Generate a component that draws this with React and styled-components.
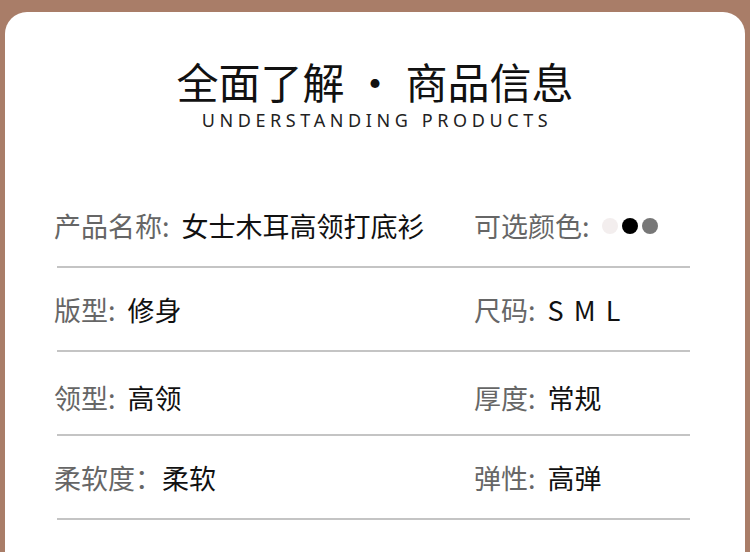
import React from "react";
import styled, { createGlobalStyle } from "styled-components";

const GlobalStyle = createGlobalStyle`
  html, body {
    margin: 0;
    padding: 0;
    background: #a97d68;
  }
  body {
    font-family: "Noto Sans CJK SC", "Noto Sans", sans-serif;
  }
`;

const Page = styled.div`
  width: 750px;
  height: 552px;
  overflow: hidden;
  padding-top: 12px;
  box-sizing: border-box;
`;

const Card = styled.div`
  margin: 0 5px;
  height: 560px;
  background: #ffffff;
  border-radius: 22px 22px 0 0;
  padding-top: 46px;
  box-sizing: border-box;
`;

const Heading = styled.header`
  text-align: center;
`;

const Title = styled.h1`
  margin: 0;
  font-size: 42px;
  line-height: 46px;
  font-weight: 400;
  color: #111;
`;

const Subtitle = styled.div`
  margin-top: 5px;
  padding-left: 4px;
  font-family: "Noto Sans", sans-serif;
  font-size: 18px;
  line-height: 22px;
  letter-spacing: 4.6px;
  color: #222;
`;

const List = styled.div`
  margin-top: 53px;
  padding: 0 55px 0 52px;
`;

const Row = styled.div`
  display: grid;
  grid-template-columns: 420px 1fr;
  height: 84px;
  box-sizing: border-box;
  padding-top: ${(p) => p.$top || 28}px;
  border-bottom: 2px solid #c4c4c4;
`;

const Field = styled.div`
  display: flex;
  align-items: center;
  height: 30px;
  margin-left: -3px;
  font-size: 27px;
  line-height: 30px;
  white-space: nowrap;
`;

const Label = styled.span`
  color: #666;
  margin-right: ${(p) => (p.$wide ? 0 : 12)}px;
`;

const Value = styled.span`
  color: #111;
  letter-spacing: ${(p) => p.$spaced || 0}px;
`;

const Dots = styled.span`
  display: inline-flex;
  align-items: center;
  gap: 4px;
`;

const Dot = styled.span`
  width: 16px;
  height: 16px;
  border-radius: 50%;
  background: ${(p) => p.$color};
`;

const rows = [
  {
    top: 27,
    left: ["产品名称:", "女士木耳高领打底衫"],
    right: ["可选颜色:", null],
  },
  { top: 27, left: ["版型:", "修身"], right: ["尺码:", "S M L"] },
  { top: 31, left: ["领型:", "高领"], right: ["厚度:", "常规"] },
  { top: 27, left: ["柔软度：", "柔软"], right: ["弹性:", "高弹"] },
];

const colors = ["#f3eeee", "#000000", "#777777"];

export default function App() {
  return (
    <Page>
      <GlobalStyle />
      <Card>
        <Heading>
          <Title>全面了解 · 商品信息</Title>
          <Subtitle>UNDERSTANDING PRODUCTS</Subtitle>
        </Heading>
        <List>
          {rows.map((r, i) => (
            <Row key={i} $top={r.top}>
              <Field>
                <Label $wide={r.left[0].endsWith("：")}>{r.left[0]}</Label>
                <Value>{r.left[1]}</Value>
              </Field>
              <Field>
                <Label>{r.right[0]}</Label>
                {r.right[1] ? (
                  <Value $spaced={r.right[1].includes(" ") ? 2 : 0}>
                    {r.right[1]}
                  </Value>
                ) : (
                  <Dots>
                    {colors.map((c) => (
                      <Dot key={c} $color={c} />
                    ))}
                  </Dots>
                )}
              </Field>
            </Row>
          ))}
        </List>
      </Card>
    </Page>
  );
}
